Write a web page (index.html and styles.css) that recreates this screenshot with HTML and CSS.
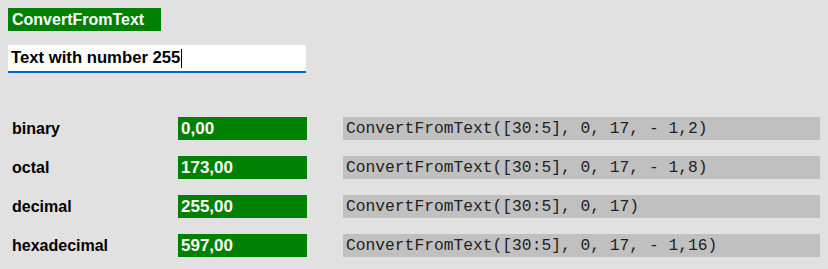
FILE: index.html
```html
<!DOCTYPE html>
<html lang="en">
<head>
  <meta charset="UTF-8" />
  <title>ConvertFromText</title>
  <link rel="stylesheet" href="styles.css">
</head>
<body>
  <div class="title">ConvertFromText</div>

  <div class="input-wrap">
    <span class="input-text">Text with number 255</span><span class="caret"></span>
  </div>

  <div class="results">
    <div class="label">binary</div>
    <div class="value">0,00</div>
    <div class="code">ConvertFromText([30:5], 0, 17, - 1,2)</div>

    <div class="label">octal</div>
    <div class="value">173,00</div>
    <div class="code">ConvertFromText([30:5], 0, 17, - 1,8)</div>

    <div class="label">decimal</div>
    <div class="value">255,00</div>
    <div class="code">ConvertFromText([30:5], 0, 17)</div>

    <div class="label">hexadecimal</div>
    <div class="value">597,00</div>
    <div class="code">ConvertFromText([30:5], 0, 17, - 1,16)</div>
  </div>
</body>
</html>
```

FILE: styles.css
```css
* { margin: 0; padding: 0; box-sizing: border-box; }

html,
body {
  background: #e1e1e1;
  font-family: "Liberation Sans", Arial, sans-serif;
  font-size: 16px;
  font-weight: 700;
  color: #000;
}

body { padding: 8px; }

.title {
  width: 153px;
  height: 23px;
  line-height: 23px;
  padding-left: 4px;
  background: #008000;
  color: #fff;
}

.input-wrap {
  display: flex;
  align-items: center;
  width: 298px;
  height: 28px;
  margin-top: 14px;
  padding-left: 3px;
  background: #fff;
  border-bottom: 2px solid #0067c0;
  font-size: 16.7px;
}
.caret {
  display: inline-block;
  width: 1px;
  height: 19px;
  margin-left: 1px;
  background: #000;
}

.results {
  display: grid;
  grid-template-columns: 170px 129px 513px;
  row-gap: 16px;
  margin-top: 44px;
}
.results > div {
  height: 23px;
  line-height: 23px;
}
.label { padding-left: 4px; }
.value {
  padding-left: 3px;
  background: #008000;
  color: #fff;
  font-size: 17px;
}
.code {
  margin-left: 36px;
  padding-left: 3px;
  background: #c0c0c0;
  font-family: "Liberation Mono", "Courier New", monospace;
  font-size: 16.3px;
  font-weight: 400;
  color: #222;
}
```
